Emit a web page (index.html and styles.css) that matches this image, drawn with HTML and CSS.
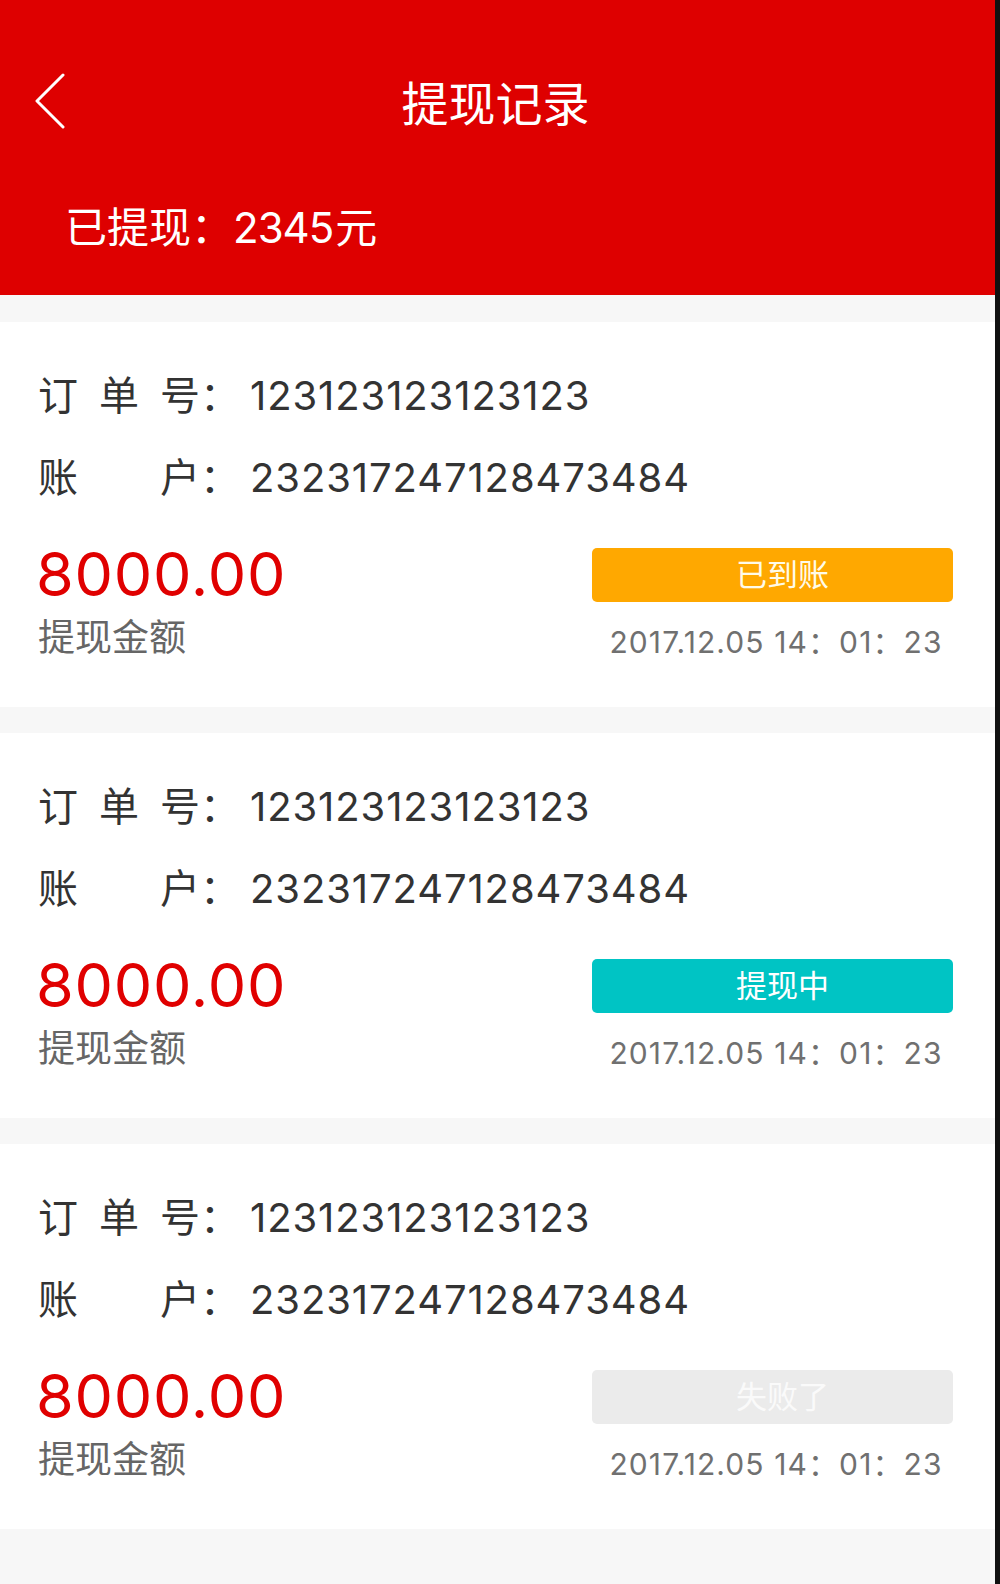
FILE: index.html
```html
<!DOCTYPE html>
<html lang="zh-CN">
<head>
<meta charset="utf-8">
<title>提现记录</title>
<link rel="stylesheet" href="styles.css">
</head>
<body>
<div class="app">
  <header class="header">
    <div class="nav">
      <div class="nav-left">
        <svg class="back" width="32" height="56" viewBox="0 0 32 56" aria-hidden="true">
          <polyline points="28,2 2,28 28,54" fill="none" stroke="#fff" stroke-width="3" stroke-linecap="round" stroke-linejoin="round"/>
        </svg>
      </div>
      <h1 class="title">提现记录</h1>
      <div class="nav-right"></div>
    </div>
    <div class="summary">已提现：<span class="sum-num">2345</span>元</div>
  </header>

  <main class="list">
    <section class="card">
      <div class="row"><span class="label"><span>订</span><span>单</span><span>号</span></span><span class="colon">：</span><span class="value">123123123123123</span></div>
      <div class="row"><span class="label"><span>账</span><span>户</span></span><span class="colon">：</span><span class="value">232317247128473484</span></div>
      <div class="bottom">
        <div class="amount-col">
          <div class="amount">8000.00</div>
          <div class="amount-label">提现金额</div>
        </div>
        <div class="status-col">
          <div class="status status-done">已到账</div>
          <div class="date">2017.12.05 14：01：23</div>
        </div>
      </div>
    </section>

    <section class="card">
      <div class="row"><span class="label"><span>订</span><span>单</span><span>号</span></span><span class="colon">：</span><span class="value">123123123123123</span></div>
      <div class="row"><span class="label"><span>账</span><span>户</span></span><span class="colon">：</span><span class="value">232317247128473484</span></div>
      <div class="bottom">
        <div class="amount-col">
          <div class="amount">8000.00</div>
          <div class="amount-label">提现金额</div>
        </div>
        <div class="status-col">
          <div class="status status-pending">提现中</div>
          <div class="date">2017.12.05 14：01：23</div>
        </div>
      </div>
    </section>

    <section class="card">
      <div class="row"><span class="label"><span>订</span><span>单</span><span>号</span></span><span class="colon">：</span><span class="value">123123123123123</span></div>
      <div class="row"><span class="label"><span>账</span><span>户</span></span><span class="colon">：</span><span class="value">232317247128473484</span></div>
      <div class="bottom">
        <div class="amount-col">
          <div class="amount">8000.00</div>
          <div class="amount-label">提现金额</div>
        </div>
        <div class="status-col">
          <div class="status status-failed">失败了</div>
          <div class="date">2017.12.05 14：01：23</div>
        </div>
      </div>
    </section>
  </main>
</div>
</body>
</html>
```

FILE: styles.css
```css
* {
  box-sizing: border-box;
  margin: 0;
  padding: 0;
}

html, body {
  background: #111111;
}

body {
  width: 1000px;
  min-height: 1584px;
  font-family: "Inter", "Noto Sans CJK SC", sans-serif;
  color: #333333;
}

.app {
  width: 995px;
  min-height: 1584px;
  background: #f7f7f7;
}

.header {
  height: 295px;
  background: #de0000;
  color: #ffffff;
}

.nav {
  height: 208px;
  display: grid;
  grid-template-columns: 1fr auto 1fr;
  align-items: center;
}

.nav-left {
  padding-left: 35px;
  display: flex;
  align-items: center;
}

.back {
  display: block;
  margin-top: -6px;
}

.title {
  font-size: 47px;
  font-weight: 400;
  line-height: 60px;
  margin-left: -4px;
}

.summary {
  padding-left: 65px;
  font-size: 42px;
  line-height: 40px;
}

.sum-num {
  letter-spacing: -1px;
  margin-right: 2px;
}

.list {
  padding-top: 27px;
  display: flex;
  flex-direction: column;
  gap: 26px;
}

.card {
  background: #ffffff;
  height: 385px;
  padding: 33px 42px 0 38px;
}

.row {
  display: flex;
  align-items: center;
  font-size: 40px;
  line-height: 82px;
  height: 82px;
  color: #333333;
}

.label {
  width: 162px;
  display: flex;
  justify-content: space-between;
}

.colon {
  width: 40px;
}

.value {
  margin-left: 10px;
  letter-spacing: 0.9px;
}

.bottom {
  margin-top: 20px;
  display: flex;
  justify-content: space-between;
  align-items: flex-start;
}

.amount {
  font-size: 61px;
  line-height: 70px;
  letter-spacing: 0.8px;
  color: #e00000;
  margin-left: -2px;
}

.amount-label {
  font-size: 37px;
  line-height: 58px;
  color: #666666;
}

.status-col {
  width: 361px;
  margin-top: 9px;
}

.status {
  height: 54px;
  line-height: 54px;
  border-radius: 5px;
  text-align: center;
  padding-left: 20px;
  font-size: 31px;
  color: #ffffff;
}

.status-done {
  background: #ffa800;
  color: #fffbe8;
}

.status-pending {
  background: #00c4c4;
}

.status-failed {
  background: #ebebeb;
  color: #fafafa;
}

.date {
  height: 80px;
  line-height: 80px;
  text-align: center;
  padding-left: 7px;
  font-size: 30px;
  letter-spacing: 1.1px;
  color: #707070;
}
```
